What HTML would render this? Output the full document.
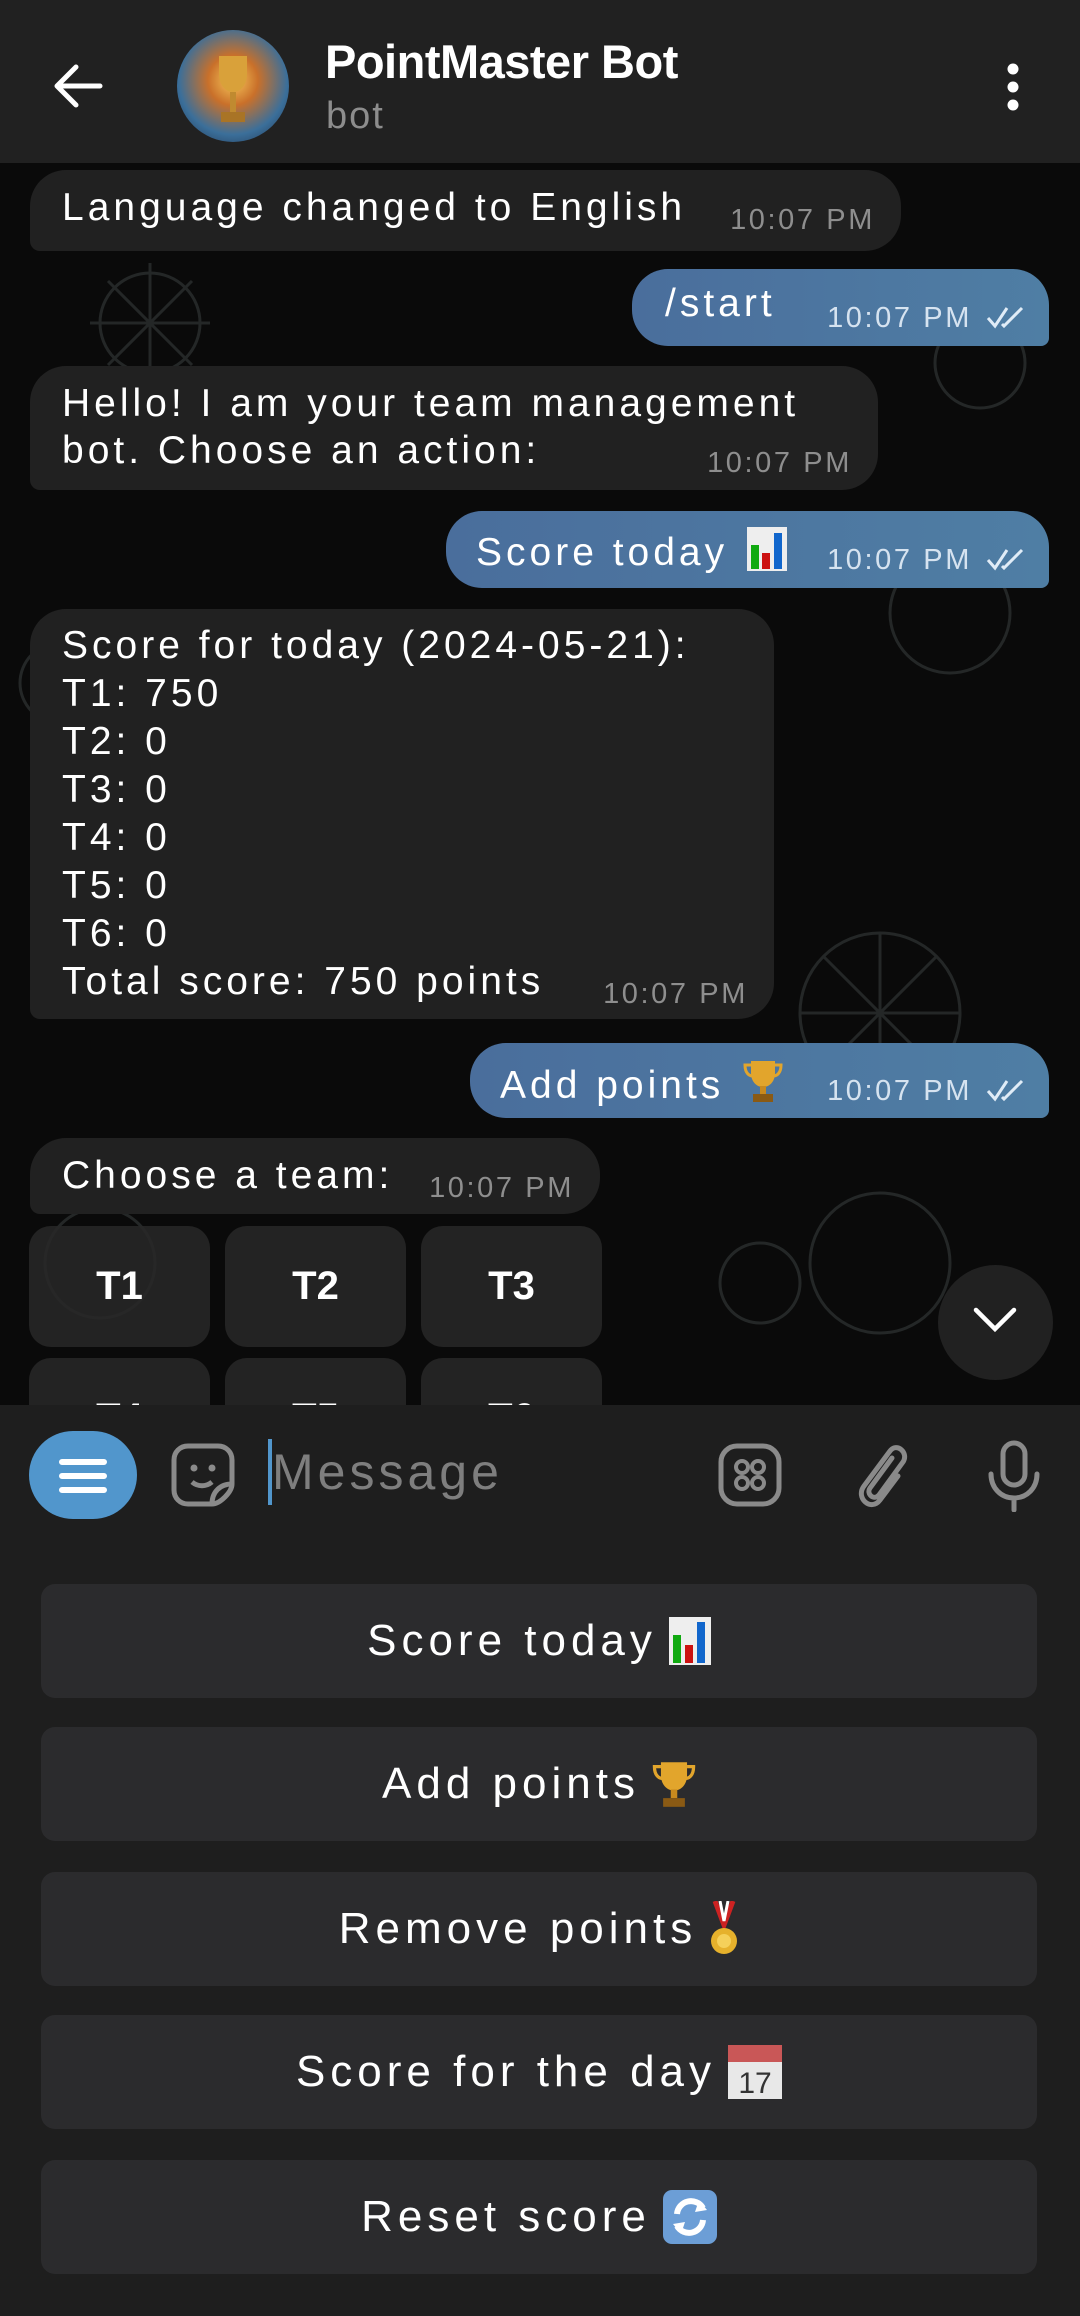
<!DOCTYPE html>
<html><head><meta charset="utf-8"><style>
*{margin:0;padding:0;box-sizing:border-box}
body{width:1080px;height:2316px;background:#0a0a0a;position:relative;overflow:hidden;font-family:"Liberation Sans","DejaVu Sans",sans-serif;color:#fff}
.abs{position:absolute}
.hdr{left:0;top:0;width:1080px;height:163px;background:#212121}
.b{position:absolute;background:#212121;border-radius:36px}
.out{background:linear-gradient(90deg,#4a6e9c,#4f7ea4)}
.t{position:absolute;font-size:39px;letter-spacing:4px;white-space:nowrap;line-height:1}
.t svg{vertical-align:-6px;margin-left:4px}
.tm{position:absolute;font-size:29px;letter-spacing:2.6px;color:#8e8e8e;white-space:nowrap;line-height:1}
.out .tm{color:#d6e3f0}
.ck{position:absolute}
.tb{position:absolute;background:rgba(40,40,40,.85);border-radius:22px;font-size:40px;font-weight:bold;display:flex;align-items:center;justify-content:center}
.kb{position:absolute;left:41px;width:996px;height:114px;background:#2b2b2d;border-radius:14px;display:flex;align-items:center;justify-content:center;font-size:44px;letter-spacing:5px}
.kb svg{margin-left:12px}
</style></head><body>
<div class="abs hdr"></div>
<svg class="abs" style="left:50px;top:62px" width="54" height="48" viewBox="0 0 54 48"><path d="M50 24H8M26 5L7 24l19 19" stroke="#fff" stroke-width="5" fill="none" stroke-linecap="round" stroke-linejoin="round"/></svg>
<div class="abs" style="left:177px;top:30px;width:112px;height:112px;border-radius:56px;background:radial-gradient(circle at 50% 45%,#f7c75a 0%,#c9702a 30%,#3b6f9a 65%,#1c2a44 100%)"></div>
<svg class="abs" style="left:205px;top:50px" width="56" height="80" viewBox="0 0 56 80"><path d="M14 6h28v18c0 10-6 18-14 18S14 34 14 24z" fill="#d9a13a"/><rect x="25" y="42" width="6" height="20" fill="#c08a30"/><rect x="16" y="62" width="24" height="10" fill="#a97426"/></svg>
<div class="abs" style="left:325px;top:34px;font-size:47px;font-weight:bold;letter-spacing:-0.5px">PointMaster Bot</div>
<div class="abs" style="left:326px;top:95px;font-size:38px;color:#8d8d8d;letter-spacing:2px">bot</div>
<svg class="abs" style="left:1000px;top:62px" width="26" height="50"><circle cx="13" cy="7" r="5.5" fill="#fff"/><circle cx="13" cy="25" r="5.5" fill="#fff"/><circle cx="13" cy="43" r="5.5" fill="#fff"/></svg>

<svg class="abs" style="left:0;top:163px" width="1080" height="1242" opacity="0.18">
<g fill="none" stroke="#9aa" stroke-width="3">
<circle cx="150" cy="160" r="50"/><circle cx="330" cy="280" r="30"/><circle cx="700" cy="600" r="70"/><circle cx="950" cy="450" r="60"/><circle cx="880" cy="850" r="80"/><circle cx="100" cy="1100" r="55"/><circle cx="760" cy="1120" r="40"/><circle cx="980" cy="200" r="45"/><circle cx="60" cy="520" r="40"/><circle cx="880" cy="1100" r="70"/>
<path d="M150 100v120M90 160h120M108 118l84 84M192 118l-84 84"/><path d="M880 770v160M800 850h160M823 793l114 114M937 793l-114 114"/>
</g></svg>

<div class="b" style="left:30px;top:170px;width:871px;height:81px;border-bottom-left-radius:10px">
<div class="t" style="left:32px;top:18px">Language changed to English</div>
<div class="tm" style="right:26px;top:36px">10:07 PM</div></div>

<div class="b out" style="left:632px;top:269px;width:417px;height:77px;border-bottom-right-radius:8px">
<div class="t" style="left:33px;top:15px">/start</div>
<div class="tm" style="right:77px;top:35px">10:07 PM</div>
<svg class="ck" style="right:18px;top:36px" width="46" height="24"><path d="M3 13l7 8L22 3M17 19l2 2L37 3" stroke="#e0ecf7" stroke-width="3" fill="none"/></svg></div>

<div class="b" style="left:30px;top:366px;width:848px;height:124px;border-bottom-left-radius:10px">
<div class="t" style="left:32px;top:18px">Hello! I am your team management</div>
<div class="t" style="left:32px;top:65px">bot. Choose an action:</div>
<div class="tm" style="right:26px;top:83px">10:07 PM</div></div>

<div class="b out" style="left:446px;top:511px;width:603px;height:77px;border-bottom-right-radius:8px">
<div class="t" style="left:30px;top:16px">Score today <svg width="40" height="44"><rect width="40" height="44" fill="#eee"/><rect x="4" y="18" width="8" height="24" fill="#1a1"/><rect x="15" y="26" width="8" height="16" fill="#c11"/><rect x="27" y="6" width="8" height="36" fill="#16c"/></svg></div>
<div class="tm" style="right:77px;top:35px">10:07 PM</div>
<svg class="ck" style="right:18px;top:36px" width="46" height="24"><path d="M3 13l7 8L22 3M17 19l2 2L37 3" stroke="#e0ecf7" stroke-width="3" fill="none"/></svg></div>

<div class="b" style="left:30px;top:609px;width:744px;height:410px;border-bottom-left-radius:10px">
<div class="t" style="left:32px;top:17px">Score for today (2024-05-21):</div>
<div class="t" style="left:32px;top:65px">T1: 750</div>
<div class="t" style="left:32px;top:113px">T2: 0</div>
<div class="t" style="left:32px;top:161px">T3: 0</div>
<div class="t" style="left:32px;top:209px">T4: 0</div>
<div class="t" style="left:32px;top:257px">T5: 0</div>
<div class="t" style="left:32px;top:305px">T6: 0</div>
<div class="t" style="left:32px;top:353px">Total score: 750 points</div>
<div class="tm" style="right:26px;top:371px">10:07 PM</div></div>

<div class="b out" style="left:470px;top:1043px;width:579px;height:75px;border-bottom-right-radius:8px">
<div class="t" style="left:30px;top:15px">Add points <svg width="40" height="46" viewBox="0 0 40 46"><path d="M8 3h24v12c0 8-5 14-12 14S8 23 8 15z" fill="#e2a52c"/><path d="M8 7H2c0 8 4 11 8 11M32 7h6c0 8-4 11-8 11" stroke="#e2a52c" stroke-width="3" fill="none"/><rect x="17" y="28" width="6" height="8" fill="#c98a1e"/><rect x="10" y="36" width="20" height="8" fill="#8a5a14"/></svg></div>
<div class="tm" style="right:77px;top:34px">10:07 PM</div>
<svg class="ck" style="right:18px;top:35px" width="46" height="24"><path d="M3 13l7 8L22 3M17 19l2 2L37 3" stroke="#e0ecf7" stroke-width="3" fill="none"/></svg></div>

<div class="b" style="left:30px;top:1138px;width:570px;height:76px;border-bottom-left-radius:10px">
<div class="t" style="left:32px;top:18px">Choose a team:</div>
<div class="tm" style="right:26px;top:36px">10:07 PM</div></div>
<div class="tb" style="left:29px;top:1226px;width:181px;height:121px">T1</div>
<div class="tb" style="left:225px;top:1226px;width:181px;height:121px">T2</div>
<div class="tb" style="left:421px;top:1226px;width:181px;height:121px">T3</div>
<div class="tb" style="left:29px;top:1358px;width:181px;height:121px;align-items:flex-start;padding-top:38px">T4</div>
<div class="tb" style="left:225px;top:1358px;width:181px;height:121px;align-items:flex-start;padding-top:38px">T5</div>
<div class="tb" style="left:421px;top:1358px;width:181px;height:121px;align-items:flex-start;padding-top:38px">T6</div>
<div class="abs" style="left:938px;top:1265px;width:115px;height:115px;border-radius:58px;background:#212121"></div>
<svg class="abs" style="left:972px;top:1305px" width="46" height="30"><path d="M4 5l19 19L42 5" stroke="#fff" stroke-width="4.5" fill="none" stroke-linecap="round"/></svg>

<div class="abs" style="left:0;top:1405px;width:1080px;height:911px;background:#1e1e1e"></div>
<div class="abs" style="left:29px;top:1431px;width:108px;height:88px;border-radius:44px;background:#5196cc"></div>
<svg class="abs" style="left:58px;top:1456px" width="50" height="40"><path d="M4 6h42M4 20h42M4 34h42" stroke="#fff" stroke-width="6" stroke-linecap="round"/></svg>
<svg class="abs" style="left:170px;top:1442px" width="66" height="66" viewBox="0 0 66 66"><path d="M42 62H18C10 62 4 56 4 48V18C4 10 10 4 18 4h30c8 0 14 6 14 14v24C62 50 50 62 42 62z" stroke="#8a8a8a" stroke-width="5" fill="none"/><path d="M42 62c0-12 8-20 20-20" stroke="#8a8a8a" stroke-width="5" fill="none"/><circle cx="24" cy="26" r="3.5" fill="#8a8a8a"/><circle cx="42" cy="26" r="3.5" fill="#8a8a8a"/><path d="M22 40c6 5 14 5 20 0" stroke="#8a8a8a" stroke-width="5" fill="none"/></svg>
<div class="abs" style="left:268px;top:1439px;width:4px;height:66px;background:#5196cc"></div>
<div class="abs" style="left:272px;top:1443px;font-size:50px;color:#7e7e7e;letter-spacing:4px">Message</div>
<svg class="abs" style="left:718px;top:1443px" width="64" height="64" viewBox="0 0 64 64"><rect x="3" y="3" width="58" height="58" rx="16" stroke="#8a8a8a" stroke-width="5" fill="none"/><circle cx="24" cy="24" r="6" stroke="#8a8a8a" stroke-width="4" fill="none"/><circle cx="40" cy="24" r="6" stroke="#8a8a8a" stroke-width="4" fill="none"/><circle cx="24" cy="40" r="6" stroke="#8a8a8a" stroke-width="4" fill="none"/><circle cx="40" cy="40" r="6" stroke="#8a8a8a" stroke-width="4" fill="none"/></svg>
<svg class="abs" style="left:852px;top:1440px" width="60" height="70" viewBox="0 0 60 70"><path d="M40 18L18 48c-4 6 4 13 9 7l24-33c6-9-6-20-13-11L12 46c-9 12 7 26 16 14l18-24" stroke="#8a8a8a" stroke-width="5" fill="none" stroke-linecap="round"/></svg>
<svg class="abs" style="left:986px;top:1440px" width="56" height="72" viewBox="0 0 56 72"><rect x="17" y="3" width="22" height="42" rx="11" stroke="#8a8a8a" stroke-width="5" fill="none"/><path d="M5 34c0 14 10 24 23 24s23-10 23-24M28 58v12" stroke="#8a8a8a" stroke-width="5" fill="none" stroke-linecap="round"/></svg>

<div class="kb" style="top:1584px">Score today<svg width="42" height="48"><rect width="42" height="48" fill="#eee"/><rect x="4" y="18" width="8" height="28" fill="#1a1"/><rect x="16" y="28" width="8" height="18" fill="#c11"/><rect x="28" y="5" width="8" height="41" fill="#16c"/></svg></div>
<div class="kb" style="top:1727px">Add points<svg width="44" height="50" viewBox="0 0 40 46"><path d="M8 3h24v12c0 8-5 14-12 14S8 23 8 15z" fill="#e2a52c"/><path d="M8 7H2c0 8 4 11 8 11M32 7h6c0 8-4 11-8 11" stroke="#e2a52c" stroke-width="3" fill="none"/><rect x="17" y="28" width="6" height="8" fill="#c98a1e"/><rect x="10" y="36" width="20" height="8" fill="#8a5a14"/></svg></div>
<div class="kb" style="top:1872px">Remove points <svg width="30" height="56" viewBox="0 0 30 56"><path d="M6 0l9 24L24 0" stroke="#c22" stroke-width="5" fill="none"/><path d="M11 0l4 20 4-20" stroke="#fff" stroke-width="3" fill="none"/><circle cx="15" cy="40" r="13" fill="#e6b12c"/><circle cx="15" cy="40" r="7" fill="#f5d05a"/></svg></div>
<div class="kb" style="top:2015px">Score for the day<svg width="54" height="54" viewBox="0 0 54 54"><rect width="54" height="54" fill="#e8e8e8"/><rect width="54" height="17" fill="#c95757"/><text x="27" y="48" font-size="30" text-anchor="middle" fill="#333" font-family="Liberation Sans" letter-spacing="0">17</text></svg></div>
<div class="kb" style="top:2160px">Reset score<svg width="54" height="54" viewBox="0 0 54 54"><rect width="54" height="54" rx="9" fill="#6c9ed6"/><path d="M14 24a14 14 0 0 1 26-6M40 30a14 14 0 0 1-26 6" stroke="#fff" stroke-width="6" fill="none"/><path d="M36 10l8 10-12 2zM18 44l-8-10 12-2z" fill="#fff"/></svg></div>
</body></html>
